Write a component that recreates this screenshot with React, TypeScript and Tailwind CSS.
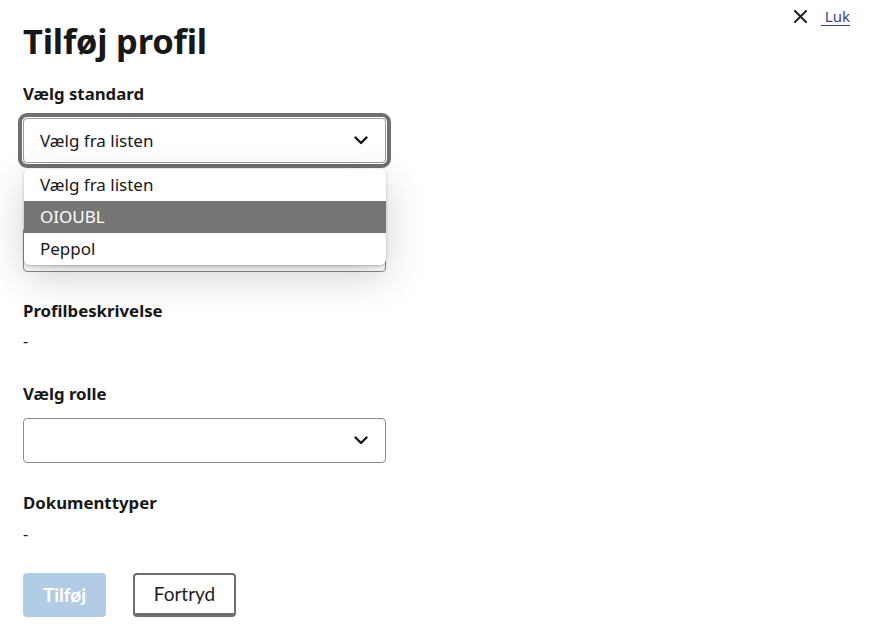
import React from "react";

const Chevron = () => (
  <svg width="14" height="9" viewBox="0 0 14 9" fill="none" className="shrink-0">
    <path d="M1.5 1.5 L7 7 L12.5 1.5" stroke="#161616" strokeWidth="2.4" strokeLinecap="round" strokeLinejoin="round" />
  </svg>
);

const XIcon = () => (
  <svg width="13" height="13" viewBox="0 0 13 13" fill="none">
    <path d="M1 1 L12 12 M12 1 L1 12" stroke="#222" strokeWidth="2" strokeLinecap="square" />
  </svg>
);

export default function App() {
  const font = { fontFamily: '"Noto Sans", "Open Sans", sans-serif' };
  return (
    <div className="min-h-[639px] w-[873px] bg-white text-[#181818] px-[23px] pt-[6px]" style={font}>
      <div className="flex items-start justify-between">
        <h1 className="mt-[13px] text-[34.5px] leading-[44px] font-bold tracking-[-0.2px]">Tilføj profil</h1>
        <button className="flex items-center text-[15px] leading-[20px] text-[#3d3f8f]">
          <XIcon />
          <span className="ml-[14px] underline underline-offset-[3px] text-[#3d3f8f]">&nbsp;Luk</span>
        </button>
      </div>

      <div className="w-[363px]">
        <label className="mt-[20px] block text-[16.8px] leading-[22px] font-bold">Vælg standard</label>
        <div className="relative mt-[13px]">
          <div className="flex h-[45px] items-center justify-between rounded-[4px] border border-[#9a9a9a] bg-white pl-[16px] pr-[17px] outline-4 outline-offset-1 outline-[#6f6f6f] outline-solid">
            <span className="text-[17px]">Vælg fra listen</span>
            <Chevron />
          </div>
          <div className="absolute left-[1px] right-0 top-[51px] z-10 overflow-hidden rounded-[6px] bg-white shadow-[0_12px_40px_rgba(0,0,0,0.18),0_1px_3px_rgba(0,0,0,0.25)]">
            <div className="flex h-[32px] items-center px-[16px] text-[17px]">Vælg fra listen</div>
            <div className="flex h-[32px] items-center bg-[#757575] px-[16px] text-[17px] text-white">OIOUBL</div>
            <div className="flex h-[32px] items-center px-[16px] text-[17px]">Peppol</div>
          </div>
        </div>

        <div className="mt-[30px] h-[22px]" aria-hidden="true" />
        <div className="mt-[12px] h-[45px] rounded-[4px] border border-[#8a8a8a] bg-white" />

        <div className="mt-[28px] text-[16.8px] leading-[22px] font-bold">Profilbeskrivelse</div>
        <div className="mt-[7px] text-[16px] leading-[24px]">-</div>

        <label className="mt-[30px] block text-[16.8px] leading-[22px] font-bold">Vælg rolle</label>
        <div className="mt-[13px] flex h-[45px] items-center justify-end rounded-[4px] border border-[#8a8a8a] bg-white pr-[17px]">
          <Chevron />
        </div>

        <div className="mt-[29px] text-[16.8px] leading-[22px] font-bold">Dokumenttyper</div>
        <div className="mt-[8px] text-[16px] leading-[24px]">-</div>

        <div className="mt-[27px] flex gap-[27px]" style={{ fontFamily: 'Lato, "Noto Sans", sans-serif' }}>
          <button className="h-[44px] w-[83px] rounded-[4px] bg-[#b3cce6] text-[19px] font-bold text-white">Tilføj</button>
          <button className="h-[44px] w-[103px] rounded-[4px] border-2 border-b-4 border-[#6e6e6e] bg-white text-[19px] text-[#1c1c1c]">Fortryd</button>
        </div>
      </div>
    </div>
  );
}
